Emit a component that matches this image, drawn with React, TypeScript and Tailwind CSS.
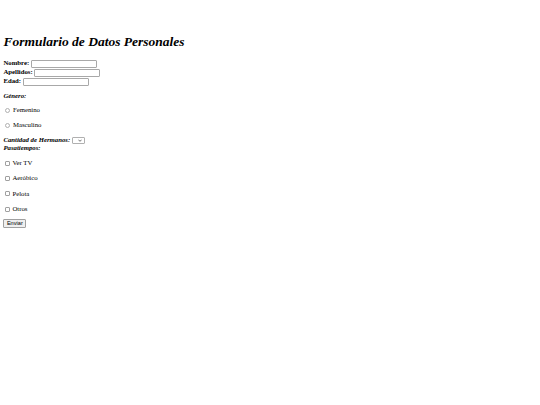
import React from 'react'

const serif = { fontFamily: '"Liberation Serif", "Times New Roman", serif' }

function TextRow({ label, inputWidth }: { label: string; inputWidth: string }) {
  return (
    <label className="flex items-center h-[9px] gap-[1.5px] text-[6.75px] font-bold leading-none">
      <span>{label}</span>
      <input
        type="text"
        className={`h-[8px] ${inputWidth} border border-[#a8a8a8] bg-white rounded-[1px] outline-none`}
      />
    </label>
  )
}

function Radio({ label }: { label: string }) {
  return (
    <label className="flex items-center h-[8px] gap-[2.5px] pl-[2px] text-[6.75px] leading-none">
      <span className="w-[5px] h-[5px] rounded-full border border-[#b0b0b0] bg-white" />
      <span>{label}</span>
    </label>
  )
}

function Check({ label }: { label: string }) {
  return (
    <label className="flex items-center h-[8px] gap-[2.5px] pl-[1.5px] text-[6.75px] leading-none">
      <span className="w-[5px] h-[5px] rounded-[1px] border border-[#a0a0a0] bg-white" />
      <span>{label}</span>
    </label>
  )
}

export default function App() {
  return (
    <div className="w-[540px] h-[405px] bg-white text-black px-[3.4px] pt-[34px]" style={serif}>
      <h1 className="text-[13.5px] font-bold italic leading-[16px] mb-[9px]">
        Formulario de Datos Personales
      </h1>

      <form className="flex flex-col">
        {/* Datos basicos */}
        <TextRow label="Nombre:" inputWidth="w-[66px]" />
        <TextRow label="Apellidos:" inputWidth="w-[66px]" />
        <TextRow label="Edad:" inputWidth="w-[66px]" />

        <p className="mt-[6px] h-[8px] flex items-center text-[6.75px] font-bold italic leading-none">Género:</p>

        <div className="mt-[6.8px] flex flex-col gap-[7px]">
          <Radio label="Femenino" />
          <Radio label="Masculino" />
        </div>

        <div className="mt-[6.5px] flex items-center h-[8px] gap-[1.5px] text-[6.75px] font-bold italic leading-none">
          <span>Cantidad de Hermanos:</span>
          <span className="flex items-center justify-end w-[13px] h-[7px] pr-[2px] border border-[#b0b0b0] rounded-[1px] bg-white">
            <svg viewBox="0 0 10 6" className="w-[4px] h-[3px]" fill="none" stroke="#222" strokeWidth="1.6">
              <path d="M1 1l4 4 4-4" />
            </svg>
          </span>
        </div>
        <p className="h-[8px] flex items-center text-[6.75px] font-bold italic leading-none">Pasatiempos:</p>

        <div className="mt-[7px] flex flex-col gap-[7.3px]">
          <Check label="Ver TV" />
          <Check label="Aeróbico" />
          <Check label="Pelota" />
          <Check label="Otros" />
        </div>

        <div className="mt-[6px] flex">
          <button
            type="button"
            className="h-[9px] px-[2.5px] text-[5.6px] leading-none bg-[#efefef] border border-[#a0a0a0] rounded-[1px]"
            style={{ fontFamily: '"Liberation Sans", Arial, sans-serif' }}
          >
            Enviar
          </button>
        </div>
      </form>
    </div>
  )
}
